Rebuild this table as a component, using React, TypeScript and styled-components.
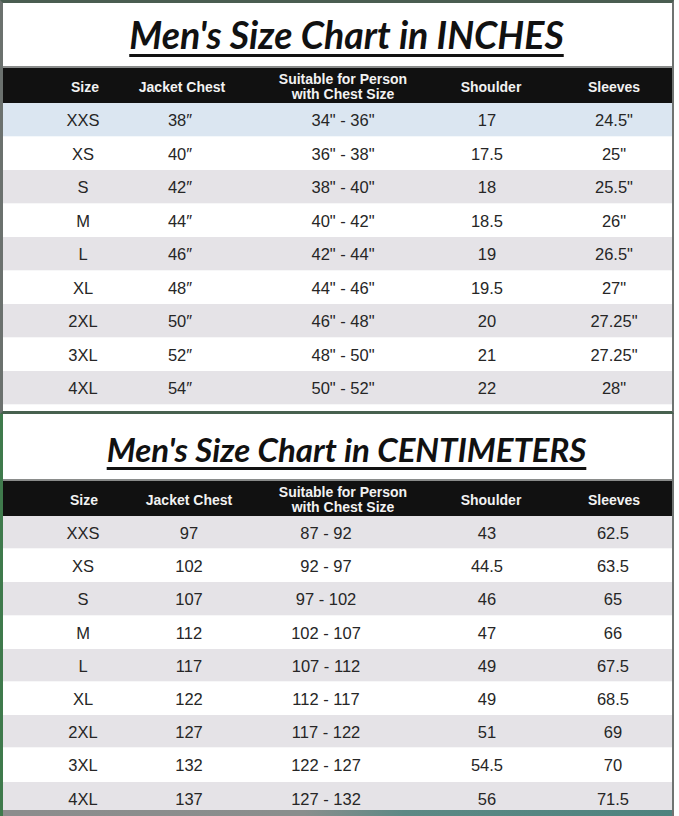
import styled, { createGlobalStyle } from 'styled-components'

const GlobalStyle = createGlobalStyle`
  html, body {
    margin: 0;
    padding: 0;
    background: #ffffff;
  }
  body {
    width: 679px;
    height: 816px;
    overflow: hidden;
    font-family: "Liberation Sans", Arial, sans-serif;
  }
`

interface ChartProps {
  $height: number;
  $edge: string;
  $top?: string;
  $bottom?: string;
}

const Chart = styled.section<ChartProps>`
  box-sizing: border-box;
  width: 674px;
  height: ${(p) => p.$height}px;
  display: flex;
  flex-direction: column;
  overflow: hidden;
  background: #ffffff;
  border-left: 3px solid ${(p) => p.$edge};
  border-right: 2px solid #6f7371;
  border-top: ${(p) => (p.$top ? `3px solid ${p.$top}` : 'none')};
  border-bottom: ${(p) => (p.$bottom ? `3px solid ${p.$bottom}` : 'none')};
`

interface TitleBarProps {
  $height: number;
  $size: number;
  $baseline: number;
}

const TitleBar = styled.div<TitleBarProps>`
  box-sizing: border-box;
  height: ${(p) => p.$height}px;
  flex-shrink: 0;
  padding-top: ${(p) => p.$baseline}px;
  padding-left: 18px;
  text-align: center;
  white-space: nowrap;
  font-family: Lato, "Open Sans", sans-serif;
  font-style: italic;
  font-weight: 700;
  font-size: ${(p) => p.$size}px;
  line-height: 1;
  color: #111111;
`

const TitleText = styled.span`
  text-decoration: underline;
  text-decoration-thickness: 3px;
  text-underline-offset: 5px;
`

interface GridProps {
  $cols: string;
  $pad: number;
}

const Head = styled.div<GridProps>`
  box-sizing: border-box;
  flex-shrink: 0;
  height: 37px;
  border-top: 2px solid #8a8c8b;
  background: #111111;
  display: grid;
  grid-template-columns: ${(p) => p.$cols};
  padding-left: ${(p) => p.$pad}px;
  padding-top: 3px;
  color: #f2f2f2;
  font-weight: 700;
  font-size: 14px;
  line-height: 15px;
`

const HeadCell = styled.div`
  display: flex;
  align-items: center;
  justify-content: center;
  text-align: center;
  white-space: nowrap;
`

const Body = styled.div`
  flex: 1;
  overflow: hidden;
`

interface RowProps extends GridProps {
  $bg: string;
  $h: number;
}

const Row = styled.div<RowProps>`
  box-sizing: border-box;
  height: ${(p) => p.$h}px;
  display: grid;
  grid-template-columns: ${(p) => p.$cols};
  padding-left: ${(p) => p.$pad}px;
  padding-top: 3px;
  background: ${(p) => p.$bg};
  border-bottom: 1px solid rgba(255, 255, 255, 0.7);
  color: #262626;
  font-size: 16.5px;
`

const Cell = styled.div`
  display: flex;
  align-items: center;
  justify-content: center;
  white-space: nowrap;
`

const Footer = styled.div`
  flex-shrink: 0;
  height: 6px;
  background: linear-gradient(90deg, #8c8d8d 0%, #8a8e8d 45%, #5d8985 60%, #4f837f 100%);
`

type Line = string[]

const inches: Line[] = [
  ['XXS', '38″', '34" - 36"', '17', '24.5"'],
  ['XS', '40″', '36" - 38"', '17.5', '25"'],
  ['S', '42″', '38" - 40"', '18', '25.5"'],
  ['M', '44″', '40" - 42"', '18.5', '26"'],
  ['L', '46″', '42" - 44"', '19', '26.5"'],
  ['XL', '48″', '44" - 46"', '19.5', '27"'],
  ['2XL', '50″', '46" - 48"', '20', '27.25"'],
  ['3XL', '52″', '48" - 50"', '21', '27.25"'],
  ['4XL', '54″', '50" - 52"', '22', '28"'],
]

const centimeters: Line[] = [
  ['XXS', '97', '87 - 92', '43', '62.5'],
  ['XS', '102', '92 - 97', '44.5', '63.5'],
  ['S', '107', '97 - 102', '46', '65'],
  ['M', '112', '102 - 107', '47', '66'],
  ['L', '117', '107 - 112', '49', '67.5'],
  ['XL', '122', '112 - 117', '49', '68.5'],
  ['2XL', '127', '117 - 122', '51', '69'],
  ['3XL', '132', '122 - 127', '54.5', '70'],
  ['4XL', '137', '127 - 132', '56', '71.5'],
]

const headings = [
  'Size',
  'Jacket Chest',
  <>Suitable for Person<br />with Chest Size</>,
  'Shoulder',
  'Sleeves',
]

const GREY = '#e5e3e7'
const WHITE = '#ffffff'

interface TableProps {
  rows: Line[];
  headCols: string;
  headPad: number;
  bodyCols: string;
  bodyPad: number;
  rowHeight: number;
  firstRow: string;
}

const Table = ({ rows, headCols, headPad, bodyCols, bodyPad, rowHeight, firstRow }: TableProps) => (
  <>
    <Head $cols={headCols} $pad={headPad}>
      {headings.map((h, i) => (
        <HeadCell key={i}>{h}</HeadCell>
      ))}
    </Head>
    <Body>
      {rows.map((r, i) => (
        <Row
          key={r[0]}
          $cols={bodyCols}
          $pad={bodyPad}
          $h={rowHeight}
          $bg={i === 0 ? firstRow : i % 2 === 0 ? GREY : WHITE}
        >
          {r.map((v, j) => (
            <Cell key={j}>{v}</Cell>
          ))}
        </Row>
      ))}
    </Body>
  </>
)

export default function App() {
  return (
    <>
      <GlobalStyle />
      <Chart $height={414} $edge="#6b716e" $top="#4a5d51" $bottom="#47614f">
        <TitleBar $height={63} $size={37.5} $baseline={13}>
          <TitleText>Men's Size Chart in INCHES</TitleText>
        </TitleBar>
        <Table
          rows={inches}
          headCols="34px 160px 162px 134px 112px"
          headPad={65}
          bodyCols="14px 180px 146px 142px 112px"
          bodyPad={73}
          rowHeight={33.5}
          firstRow="#dbe6f1"
        />
      </Chart>
      <Chart $height={402} $edge="#3f7a4c">
        <TitleBar $height={65} $size={33} $baseline={19}>
          <TitleText>Men's Size Chart in CENTIMETERS</TitleText>
        </TitleBar>
        <Table
          rows={centimeters}
          headCols="64px 146px 162px 134px 112px"
          headPad={49}
          bodyCols="122px 90px 184px 138px 114px"
          bodyPad={19}
          rowHeight={33.2}
          firstRow={GREY}
        />
        <Footer />
      </Chart>
    </>
  )
}
